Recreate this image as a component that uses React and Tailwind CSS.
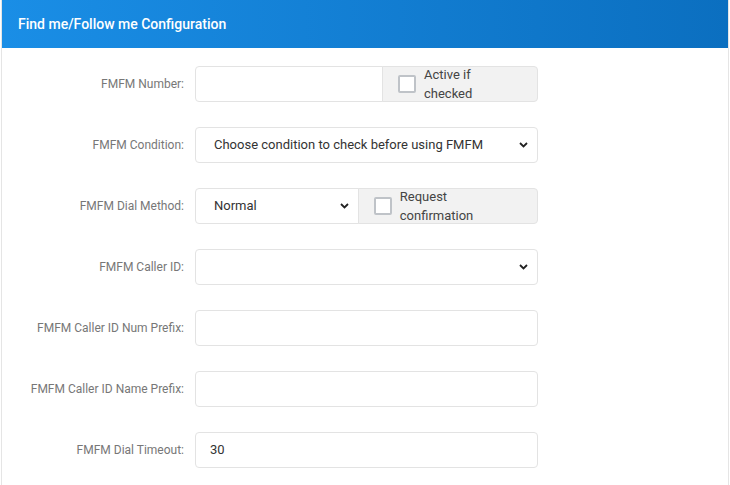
import React from 'react';

const Chevron = () => (
  <svg className="absolute right-[9px] top-1/2 -translate-y-1/2 pointer-events-none" width="9" height="6" viewBox="0 0 9 6">
    <path d="M1 1l3.5 3.5L8 1" fill="none" stroke="#222" strokeWidth="1.8" />
  </svg>
);

function Row({ label, children }) {
  return (
    <div className="flex items-center h-9">
      <label className="w-[182px] text-right text-[12px] text-[#777]">{label}</label>
      <div className="ml-[11px] w-[343px] h-9 flex">{children}</div>
    </div>
  );
}

const Input = ({ value = '', className = '' }) => (
  <div className={`h-9 border border-[#e3e3e3] rounded bg-white flex items-center px-[14px] text-[13px] text-[#333] ${className}`}>{value}</div>
);

const Select = ({ value = '', className = '' }) => (
  <div className={`relative h-9 border border-[#e3e3e3] rounded bg-white flex items-center px-[18px] text-[13px] text-[#333] ${className}`}>
    {value}
    <Chevron />
  </div>
);

const Check = ({ text, className = '' }) => (
  <div className={`h-9 border border-[#e3e3e3] rounded-r bg-[#f2f2f2] flex items-center gap-[8px] px-[15px] text-[13px] text-[#444] ${className}`}>
    <span className="w-[18px] h-[18px] border-2 border-[#bfc3c8] rounded-[2px] bg-white" />
    {text}
  </div>
);

export default function App() {
  return (
    <div className="w-[730px] h-[485px] bg-white" style={{ fontFamily: 'Roboto, sans-serif' }}>
      <div className="mx-px h-full border-x border-[#e5e5e5]">
        <div className="h-12 bg-gradient-to-r from-[#1a8ee6] to-[#0b6fc0] flex items-center px-4 text-white text-[14px] font-medium">
          Find me/Follow me Configuration
        </div>
        <div className="pt-[18px] flex flex-col gap-[25px]">
          <Row label="FMFM Number:">
            <Input className="w-[188px] rounded-r-none" />
            <Check text="Active if checked" className="flex-1 -ml-px" />
          </Row>
          <Row label="FMFM Condition:">
            <Select className="w-full" value="Choose condition to check before using FMFM" />
          </Row>
          <Row label="FMFM Dial Method:">
            <Select className="w-[164px] rounded-r-none" value="Normal" />
            <Check text="Request confirmation" className="flex-1 -ml-px" />
          </Row>
          <Row label="FMFM Caller ID:">
            <Select className="w-full" />
          </Row>
          <Row label="FMFM Caller ID Num Prefix:">
            <Input className="w-full" />
          </Row>
          <Row label="FMFM Caller ID Name Prefix:">
            <Input className="w-full" />
          </Row>
          <Row label="FMFM Dial Timeout:">
            <Input className="w-full" value="30" />
          </Row>
        </div>
      </div>
    </div>
  );
}
